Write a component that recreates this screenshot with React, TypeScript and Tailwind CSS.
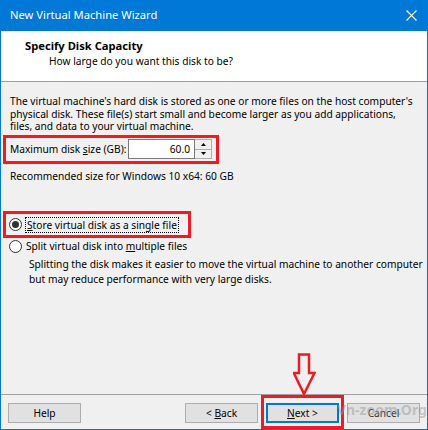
import React from "react";

const font = { fontFamily: '"Noto Sans", "Segoe UI", sans-serif' };

function Btn({ children, primary }: { children: React.ReactNode; primary?: boolean }) {
    return (
        <div
            className={
                "w-[73px] h-[20px] flex items-center justify-center bg-[#e1e1e1] text-[10.2px] text-black " +
                (primary ? "border-2 border-[#0078d7]" : "border border-[#adadad]")
            }
        >
            <span className="whitespace-pre">{children}</span>
        </div>
    );
}

function Radio({ checked }: { checked?: boolean }) {
    return (
        <div className="w-[13px] h-[13px] rounded-full border border-[#333333] bg-white flex items-center justify-center shrink-0">
            {checked && <div className="w-[7px] h-[7px] rounded-full bg-[#333333]" />}
        </div>
    );
}

export default function App() {
    return (
        <div
            className="w-[428px] h-[430px] flex flex-col bg-[#f0f0f0] border-x border-b border-[#0078d7] text-[10.2px] leading-[12.5px] text-black overflow-hidden"
            style={font}
        >
            {/* title bar */}
            <div className="h-[31px] shrink-0 bg-[#0078d7] flex items-center justify-between pl-[9px] pr-[9px] text-white">
                <span className="text-[11.2px]">New Virtual Machine Wizard</span>
                <svg width="11" height="11" viewBox="0 0 11 11" className="mr-[1px]">
                    <path d="M0.5 0.5 L10.5 10.5 M10.5 0.5 L0.5 10.5" stroke="white" strokeWidth="1.1" />
                </svg>
            </div>

            {/* header */}
            <div className="h-[51px] shrink-0 bg-white border-b border-[#a0a0a0] pl-[24px] pt-[8px]">
                <div className="font-bold text-[11.2px] leading-[13px]">Specify Disk Capacity</div>
                <div className="pl-[24px] mt-[3px] leading-[13px]">How large do you want this disk to be?</div>
            </div>

            {/* body */}
            <div className="flex-1 flex flex-col px-[2px] pt-[13px]">
                <p className="pl-[7px] whitespace-nowrap">
                    The virtual machine's hard disk is stored as one or more files on the host computer's
                    <br />
                    physical disk. These file(s) start small and become larger as you add applications,
                    <br />
                    files, and data to your virtual machine.
                </p>

                <div className="mt-[2px] w-[216px] h-[29px] border-[3px] border-[#ed1c24] flex items-center pl-[4px]">
                    <span className="w-[118px] whitespace-nowrap">
                        Maximum disk <span className="underline">s</span>ize (GB):
                    </span>
                    <div className="w-[67px] h-[20px] bg-white border border-[#7a7a7a] flex items-center justify-end pr-[4px]">
                        60.0
                    </div>
                    <div className="w-[17px] h-[20px] flex flex-col border border-l-0 border-[#adadad] bg-[#f0f0f0]">
                        <div className="flex-1 flex items-center justify-center border-b border-[#adadad]">
                            <svg width="5" height="3" viewBox="0 0 5 3"><path d="M2.5 0 L5 3 L0 3Z" fill="#000" /></svg>
                        </div>
                        <div className="flex-1 flex items-center justify-center">
                            <svg width="5" height="3" viewBox="0 0 5 3"><path d="M0 0 L5 0 L2.5 3Z" fill="#000" /></svg>
                        </div>
                    </div>
                </div>

                <div className="pl-[7px] mt-[6px]">Recommended size for Windows 10 x64: 60 GB</div>

                <div className="mt-[29px] w-[188px] h-[27px] border-[3px] border-[#ed1c24] flex items-center pl-[3px] gap-[3px]">
                    <Radio checked />
                    <span className="border border-dotted border-black px-[1px] leading-[14px] whitespace-nowrap">
                        <span className="underline">S</span>tore virtual disk as a single file
                    </span>
                </div>
                <div className="flex items-center pl-[6px] gap-[4px] mt-[2px]">
                    <Radio />
                    <span>
                        Split virtual disk into <span className="underline">m</span>ultiple files
                    </span>
                </div>
                <p className="pl-[26px] mt-[4px] leading-[14.5px] whitespace-nowrap">
                    Splitting the disk makes it easier to move the virtual machine to another computer
                    <br />
                    but may reduce performance with very large disks.
                </p>
            </div>

            {/* footer */}
            <div className="relative h-[35px] shrink-0 border-t border-[#a0a0a0] flex items-start pl-[7px] pr-[7px]">
                <div className="mt-[8px]">
                    <Btn>Help</Btn>
                </div>
                <div className="flex-1" />
                <div className="mt-[8px]">
                    <Btn>
                        &lt; <span className="underline">B</span>ack
                    </Btn>
                </div>
                <div className="ml-[3px] border-[3px] border-[#ed1c24] px-[2px] pt-[5px] h-[34px]">
                    <Btn primary>
                        <span className="underline">N</span>ext &gt;
                    </Btn>
                </div>
                <div className="mt-[8px] ml-[3px] relative">
                    <Btn>
                        <span className="text-[#333]">Cancel</span>
                    </Btn>
                    {/* watermark over the cancel button */}
                    <span className="absolute left-[-10px] top-[1px] text-[14px] font-bold text-[#9a9a9a]/50 whitespace-nowrap pointer-events-none">
                        Vn-zoom.Org
                    </span>
                </div>

                {/* red arrow annotation */}
                <svg className="absolute left-[292px] top-[-42px]" width="23" height="43" viewBox="0 0 23 43">
                    <path
                        d="M6 1.5 H16 V20 H21.5 L11 41 L0.8 20 H6 Z"
                        fill="none"
                        stroke="#ed1c24"
                        strokeWidth="2.5"
                    />
                </svg>
            </div>
        </div>
    );
}
